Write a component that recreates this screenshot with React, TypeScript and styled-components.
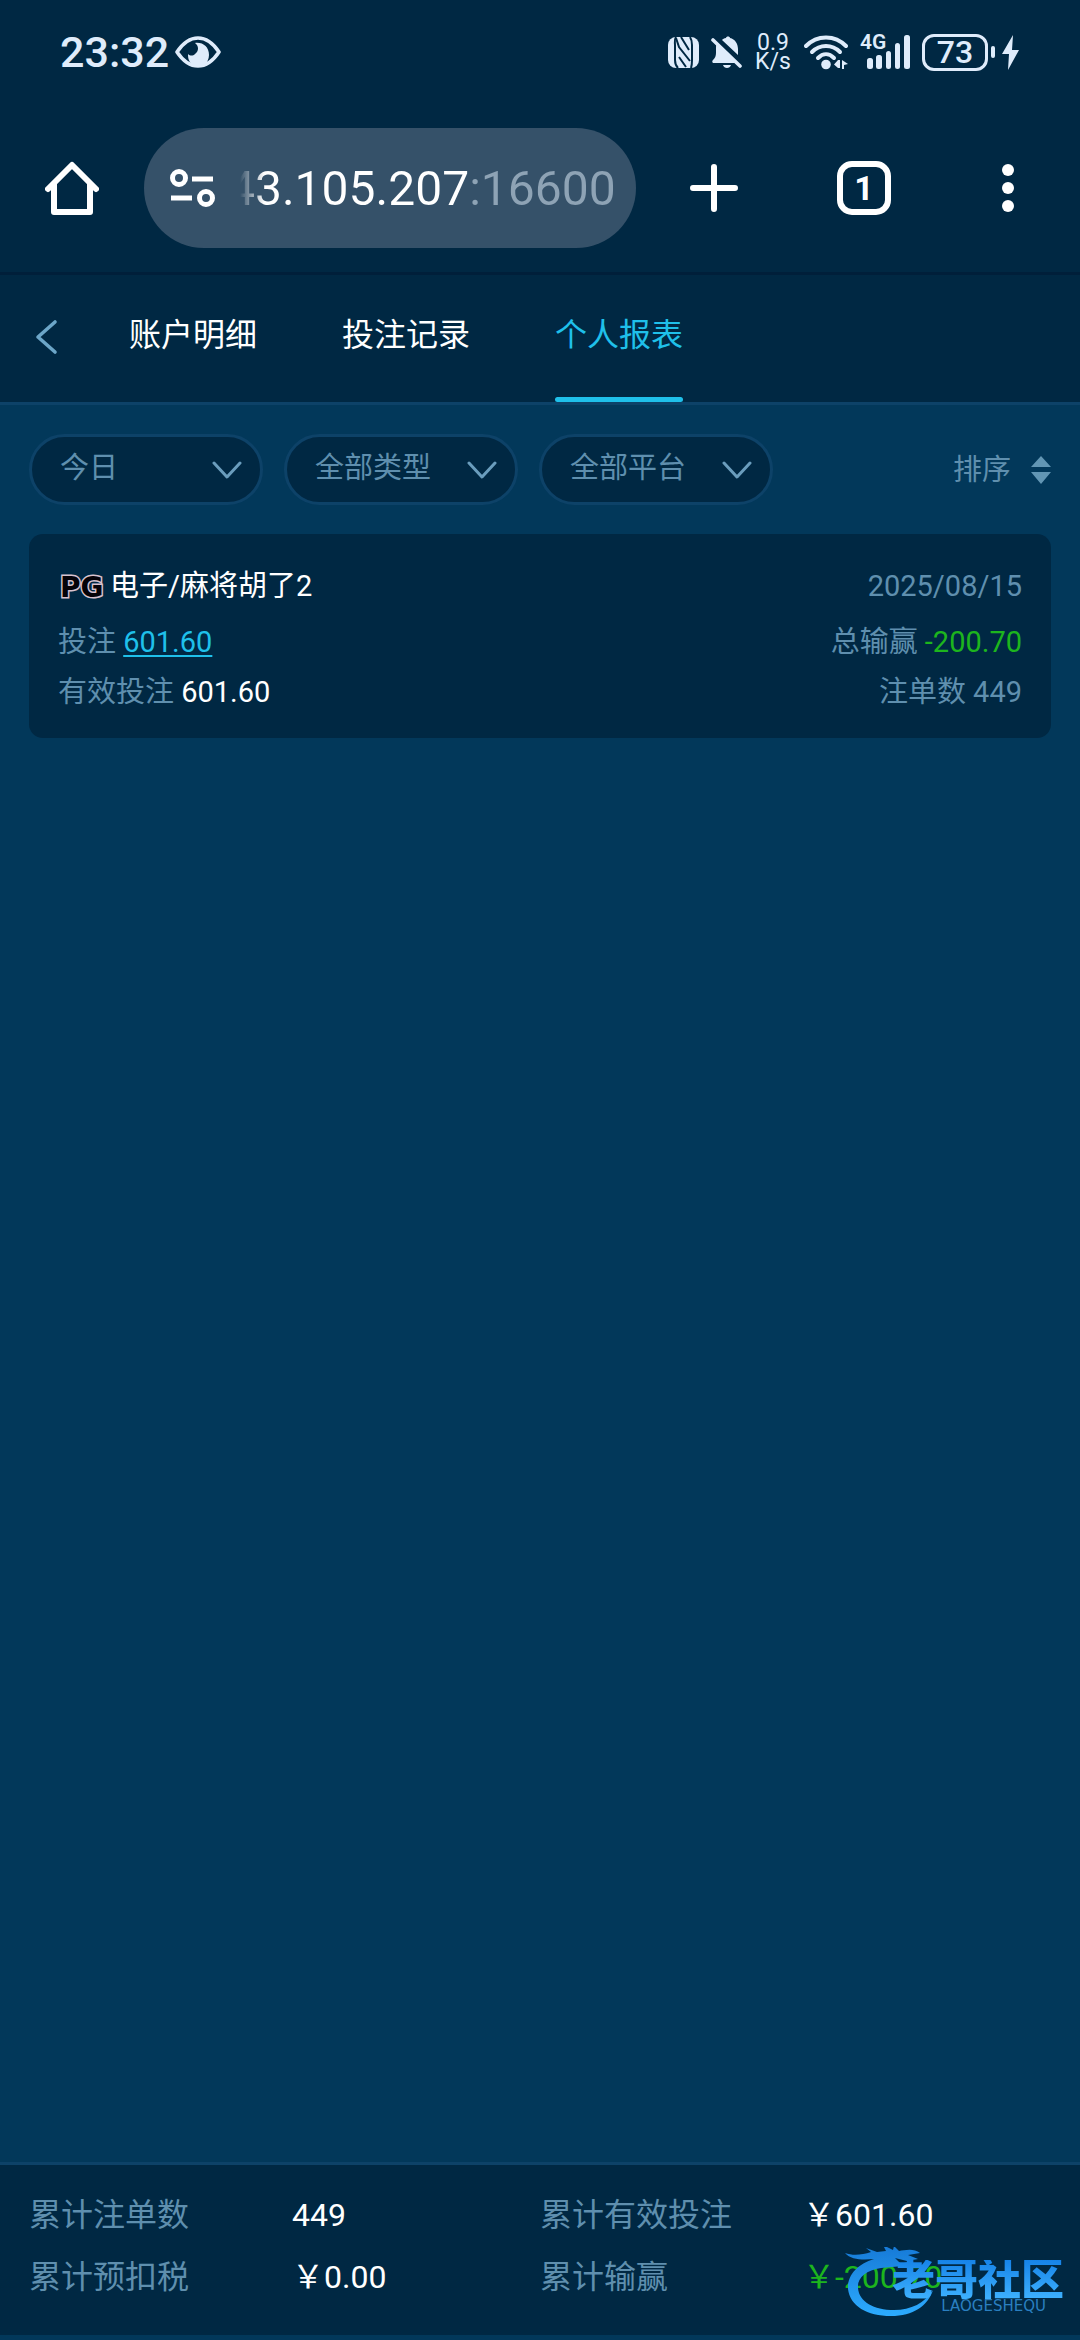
import React from 'react';
import styled, { createGlobalStyle } from 'styled-components';

const color = {
  deep: '#002843',
  page: '#02385a',
  line: '#0d4268',
  seam: '#001f3a',
  muted: '#5f8fae',
  accent: '#1fc0ea',
  green: '#1db51d',
  status: '#dfecfb',
  pill: '#355169',
};

const font = `Roboto, "Noto Sans CJK SC", sans-serif`;

const GlobalStyle = createGlobalStyle`
  * { box-sizing: border-box; }
  body { margin: 0; background: ${color.page}; font-family: ${font}; }
  button, select, input { font: inherit; color: inherit; border: 0; background: none; padding: 0; margin: 0; }
  svg { display: block; flex: none; }
`;

const Screen = styled.div`
  min-height: 100vh;
  display: flex;
  flex-direction: column;
  padding-bottom: 5px;
  background: ${color.page};
  color: #fff;
`;

const StatusBar = styled.div`
  height: 104px;
  padding: 0 61px 0 60px;
  display: flex;
  align-items: center;
  justify-content: space-between;
  background: ${color.deep};
  color: ${color.status};
`;

const StatusGroup = styled.div<{ $gap: number }>`
  display: flex;
  align-items: center;
  gap: ${(p) => p.$gap}px;
`;

const Clock = styled.time`
  font-size: 43px;
  line-height: 60px;
  font-weight: 500;
`;

const NetSpeed = styled.div`
  width: 32px;
  margin: 0 3px;
  display: flex;
  flex-direction: column;
  align-items: center;
  font-size: 23px;
  line-height: 19px;
  font-weight: 400;
`;

const Signal = styled.div`
  position: relative;
  width: 50px;
`;

const SignalLabel = styled.span`
  position: absolute;
  left: 0;
  top: -4px;
  font-size: 21px;
  line-height: 24px;
  font-weight: 600;
`;

const Battery = styled.div`
  width: 66px;
  height: 37px;
  border: 3px solid currentColor;
  border-radius: 12px;
  display: flex;
  align-items: center;
  justify-content: center;
  font-size: 32px;
  line-height: 32px;
  font-weight: 500;
`;

const BatteryTip = styled.div`
  width: 4px;
  height: 12px;
  margin-right: 4px;
  border-radius: 2px;
  background: currentColor;
`;

const Toolbar = styled.div`
  height: 171px;
  display: flex;
  align-items: center;
  background: ${color.deep};
  border-bottom: 3px solid ${color.seam};
`;

const ToolButton = styled.button<{ $width: number }>`
  width: ${(p) => p.$width}px;
  height: 120px;
  display: flex;
  align-items: center;
  justify-content: center;
`;

const AddressBar = styled.label`
  flex: 1;
  min-width: 0;
  height: 120px;
  padding: 0 12px 0 26px;
  display: flex;
  align-items: center;
  gap: 13px;
  border-radius: 60px;
  background: ${color.pill};
`;

const AddressInput = styled.input`
  flex: 1;
  min-width: 0;
  height: 72px;
  font-size: 48px;
  outline: none;
  color: transparent;
  background: linear-gradient(
    90deg,
    transparent 12px,
    #fff 36px,
    #fff 241px,
    #8ea3b5 241px
  );
  background-clip: text;
  -webkit-background-clip: text;
`;

const TabCount = styled.span`
  width: 54px;
  height: 54px;
  border: 6px solid #fff;
  border-radius: 15px;
  display: flex;
  align-items: center;
  justify-content: center;
  font-size: 34px;
  line-height: 34px;
  font-weight: 700;
`;

const NavBar = styled.nav`
  height: 130px;
  display: flex;
  align-items: stretch;
  background: ${color.deep};
  border-bottom: 3px solid ${color.line};
`;

const BackButton = styled.button`
  width: 129px;
  padding: 0 0 3px 35px;
  display: flex;
  align-items: center;
`;

const Tabs = styled.div`
  display: flex;
  gap: 85px;
`;

const Tab = styled.button<{ $active?: boolean }>`
  display: flex;
  flex-direction: column;
  justify-content: space-between;
  padding-top: 36px;
  font-size: 32px;
  line-height: 48px;
  color: ${(p) => (p.$active ? color.accent : '#fff')};

  &::after {
    content: '';
    width: 100%;
    height: 5px;
    border-radius: 3px;
    background: ${(p) => (p.$active ? color.accent : 'transparent')};
  }
`;

const Main = styled.main`
  flex: 1;
  padding: 29px;
  display: flex;
  flex-direction: column;
  gap: 29px;
`;

const Filters = styled.div`
  display: flex;
  align-items: center;
  gap: 21px;
  color: ${color.muted};
`;

const SelectBox = styled.div`
  width: 234px;
  height: 71px;
  display: grid;
  align-items: center;

  > * {
    grid-area: 1 / 1;
  }

  > svg {
    justify-self: end;
    margin-right: 21px;
    pointer-events: none;
  }
`;

const Select = styled.select`
  appearance: none;
  width: 100%;
  height: 100%;
  padding: 0 60px 3px 28px;
  border: 3px solid ${color.line};
  border-radius: 36px;
  background: ${color.deep};
  font-size: 29px;
`;

const SortButton = styled.button`
  margin-left: auto;
  display: flex;
  align-items: center;
  gap: 20px;
  font-size: 29px;
  line-height: 44px;
`;

const Card = styled.article`
  padding: 30px 29px 21px;
  border-radius: 14px;
  background: ${color.deep};
  color: ${color.muted};
  font-size: 29px;
  line-height: 50px;
`;

const CardHead = styled.header`
  display: flex;
  align-items: center;
  justify-content: space-between;
  margin-bottom: 9px;
  line-height: 44px;
`;

const GameTitle = styled.h2`
  margin: 0;
  display: flex;
  align-items: center;
  font-size: 29px;
  font-weight: 400;
  color: #fff;
`;

const Brand = styled.span`
  width: 52px;
  padding: 4px 0 0 2px;
  font-family: "DejaVu Sans", sans-serif;
  font-size: 28px;
  line-height: 40px;
  font-weight: 700;
  color: #050208;
  -webkit-text-stroke: 3px #d8c2cf;
  paint-order: stroke fill;
`;

const CardRow = styled.div`
  display: flex;
  justify-content: space-between;
`;

const Value = styled.span<{ $tone?: 'green' }>`
  color: ${(p) => (p.$tone === 'green' ? color.green : '#fff')};
`;

const BetLink = styled.a`
  color: ${color.accent};
  text-decoration: underline;
  text-decoration-thickness: 2px;
  text-underline-offset: 3px;
`;

const Footer = styled.footer`
  position: relative;
  padding: 19px 29px 27px;
  border-top: 3px solid ${color.line};
  background: ${color.deep};
`;

const Totals = styled.dl`
  margin: 0;
  display: grid;
  grid-template-columns: 1fr 1fr;
  font-size: 32px;
  line-height: 62px;
`;

const Total = styled.div`
  display: flex;

  dt {
    width: 263px;
    color: ${color.muted};
  }

  dd {
    margin: 0;
  }
`;

const Watermark = styled.div`
  position: absolute;
  right: 16px;
  bottom: 18px;
  display: flex;
  align-items: center;
  pointer-events: none;
`;

const WatermarkWords = styled.div`
  margin: 8px 0 0 -44px;
  display: flex;
  flex-direction: column;
  align-items: flex-end;
`;

const WatermarkName = styled.span`
  font-size: 43px;
  line-height: 40px;
  font-weight: 900;
  background: linear-gradient(#1683e8, #3fb2ff);
  background-clip: text;
  -webkit-background-clip: text;
  color: transparent;
`;

const WatermarkLatin = styled.span`
  padding-right: 18px;
  font-family: "DejaVu Sans", sans-serif;
  font-size: 15px;
  line-height: 12px;
  color: #2a7fc0;
`;

const EyeIcon = () => (
  <svg width="46" height="32" viewBox="0 0 46 32" aria-hidden="true">
    <path d="M2 16C8 7 15 2 23 2s15 5 21 14c-6 9-13 14-21 14S8 25 2 16Z" fill="none" stroke="currentColor" strokeWidth="3.6" strokeLinejoin="round" />
    <path d="M20 7c8-1 14 4 14 12 0 4-2 8-5 10H18c-4-3-5-6-5-11 2 2 5 2 7 0 4-3 4-8 0-11Z" fill="currentColor" />
  </svg>
);

const NfcIcon = () => (
  <svg width="31" height="33" viewBox="0 0 31 33" aria-hidden="true">
    <rect x="0" y="1" width="31" height="31" rx="8" fill="currentColor" />
    <path d="M8 1C6 4 7 6 7 9v15c0 3 0 5 3 8M22 1c2 3 2 5 2 8v15c0 3 0 5-1 8" fill="none" stroke="#002843" strokeWidth="2" />
    <path d="M8 2 11 11 22 25M11 21l7 10M13 1l8 13" fill="none" stroke="#002843" strokeWidth="2" />
  </svg>
);

const BellOffIcon = () => (
  <svg width="31" height="34" viewBox="0 0 31 34" aria-hidden="true">
    <path d="M11 5c1-1 2-2 4-2 0-2 4-2 4 0 5 1 8 6 8 11v6L11 5ZM6 9l19 19H2c-1-1-1-2 0-3 2-2 3-4 3-7v-5c0-2 0-3 1-4ZM12 30h8c-1 4-7 4-8 0Z" fill="currentColor" />
    <path d="m2 5 27 26" stroke="currentColor" strokeWidth="3.6" strokeLinecap="round" />
    <path d="m5 2 26 25" stroke="#002843" strokeWidth="2" />
  </svg>
);

const WifiIcon = () => (
  <svg width="44" height="36" viewBox="0 0 44 36" aria-hidden="true">
    <g fill="none" stroke="currentColor" strokeWidth="4" strokeLinecap="round">
      <path d="M2 12C13 .5 31 .5 42 12" />
      <path d="M8 18c8-8 20-8 28 0" />
      <path d="M14 24c5-5 11-5 16 0" />
    </g>
    <circle cx="22" cy="30.500" r="4.800" fill="currentColor" />
    <path d="M34 26v8l-4-3.500ZM34 26h2v8h-2ZM38 26l6 4-4 1v4h-2Z" fill="currentColor" />
  </svg>
);

const SignalBars = () => (
  <svg width="50" height="36" viewBox="0 0 50 36" aria-hidden="true">
    <g fill="currentColor">
      <rect x="7" y="24" width="6" height="11" rx="2.500" />
      <rect x="16" y="21" width="6" height="14" rx="2.500" />
      <rect x="26" y="17" width="5" height="18" rx="2.500" />
      <rect x="35" y="9" width="5" height="26" rx="2.500" />
      <rect x="44" y="1" width="6" height="34" rx="2.500" />
    </g>
  </svg>
);

const BoltIcon = () => (
  <svg width="17" height="35" viewBox="0 0 17 35" aria-hidden="true">
    <path d="M11 0 0 19h7L6 35l11-20h-7Z" fill="currentColor" />
  </svg>
);

const HomeIcon = () => (
  <svg width="54" height="54" viewBox="0 0 54 54" aria-hidden="true">
    <path d="M3 28 27 4l24 24M9 23v28h36V23" fill="none" stroke="#fff" strokeWidth="6" strokeLinecap="round" strokeLinejoin="round" />
  </svg>
);

const SiteInfoIcon = () => (
  <svg width="45" height="40" viewBox="0 0 45 40" aria-hidden="true">
    <g fill="none" stroke="#fff" strokeWidth="5">
      <circle cx="9" cy="10" r="6.500" />
      <path d="M22 11h21M1 30h21" />
      <circle cx="36" cy="30" r="6.500" />
    </g>
  </svg>
);

const PlusIcon = () => (
  <svg width="48" height="48" viewBox="0 0 48 48" aria-hidden="true">
    <path d="M24 3v42M3 24h42" stroke="#fff" strokeWidth="6" strokeLinecap="round" />
  </svg>
);

const MoreIcon = () => (
  <svg width="12" height="48" viewBox="0 0 12 48" fill="#fff" aria-hidden="true">
    <circle cx="6" cy="6" r="6" />
    <circle cx="6" cy="24" r="6" />
    <circle cx="6" cy="42" r="6" />
  </svg>
);

const BackIcon = () => (
  <svg width="23" height="36" viewBox="0 0 23 36" aria-hidden="true">
    <path d="M20 3 3 18l17 15" fill="none" stroke="#6ca6c8" strokeWidth="3.600" strokeLinecap="round" strokeLinejoin="round" />
  </svg>
);

const ChevronIcon = () => (
  <svg width="30" height="18" viewBox="0 0 30 18" aria-hidden="true">
    <path d="m2 2 13 14L28 2" fill="none" stroke="#6a9dbd" strokeWidth="3" strokeLinecap="round" strokeLinejoin="round" />
  </svg>
);

const SortIcon = () => (
  <svg width="20" height="30" viewBox="0 0 20 30" fill="#6296b4" aria-hidden="true">
    <path d="M10 1 20 12H0ZM10 29 20 17H0Z" />
  </svg>
);

const DragonIcon = () => (
  <svg width="92" height="70" viewBox="0 0 92 70" aria-hidden="true">
    <defs>
      <linearGradient id="dragon" x1="0" y1="0" x2="0" y2="1">
        <stop offset="0" stopColor="#1679d6" />
        <stop offset="1" stopColor="#2cabff" />
      </linearGradient>
    </defs>
    <g fill="url(#dragon)">
      <path d="M30 12C14 17 3 28 4 42c2 17 19 27 43 27 22 0 37-10 42-26-8 13-22 20-39 20-20 0-35-8-36-22-1-10 8-18 23-20l22-2-8-8 12 3 11-2-10-4 12-2c-6-5-15-3-21-2l-5-5-1 4-10-5 3 6-9 1-11-4 5 4C18 8 9 9 1 6c6 7 18 7 29 6Z" />
      <path d="m52 18 18 3 6-2-12-4Z" />
    </g>
  </svg>
);

const FilterSelect = ({ label, value }: { label: string; value: string }) => (
  <SelectBox>
    <Select aria-label={label} defaultValue={value}>
      <option>{value}</option>
    </Select>
    <ChevronIcon />
  </SelectBox>
);

const tabs = ['账户明细', '投注记录', '个人报表'];

const totals: { label: string; value: string; tone?: 'green' }[] = [
  { label: '累计注单数', value: '449' },
  { label: '累计有效投注', value: '￥601.60' },
  { label: '累计预扣税', value: '￥0.00' },
  { label: '累计输赢', value: '￥-200.70', tone: 'green' },
];

export default function App() {
  return (
    <Screen lang="zh-CN">
      <GlobalStyle />
      <StatusBar>
        <StatusGroup $gap={6}>
          <Clock>23:32</Clock>
          <EyeIcon />
        </StatusGroup>
        <StatusGroup $gap={12}>
          <NfcIcon />
          <BellOffIcon />
          <NetSpeed>
            <span>0.9</span>
            <span>K/s</span>
          </NetSpeed>
          <WifiIcon />
          <Signal>
            <SignalLabel>4G</SignalLabel>
            <SignalBars />
          </Signal>
          <StatusGroup $gap={3}>
            <Battery>73</Battery>
            <BatteryTip />
            <BoltIcon />
          </StatusGroup>
        </StatusGroup>
      </StatusBar>

      <Toolbar>
        <ToolButton $width={144} aria-label="主页">
          <HomeIcon />
        </ToolButton>
        <AddressBar>
          <SiteInfoIcon />
          <AddressInput type="text" aria-label="网址" defaultValue="43.105.207:16600" />
        </AddressBar>
        <ToolButton $width={156} aria-label="新标签页">
          <PlusIcon />
        </ToolButton>
        <ToolButton $width={144} aria-label="切换标签页">
          <TabCount>1</TabCount>
        </ToolButton>
        <ToolButton $width={144} aria-label="更多">
          <MoreIcon />
        </ToolButton>
      </Toolbar>

      <NavBar>
        <BackButton aria-label="返回">
          <BackIcon />
        </BackButton>
        <Tabs>
          {tabs.map((name) => (
            <Tab key={name} $active={name === '个人报表'}>
              {name}
            </Tab>
          ))}
        </Tabs>
      </NavBar>

      <Main>
        <Filters>
          <FilterSelect label="日期" value="今日" />
          <FilterSelect label="类型" value="全部类型" />
          <FilterSelect label="平台" value="全部平台" />
          <SortButton>
            排序
            <SortIcon />
          </SortButton>
        </Filters>

        <Card>
          <CardHead>
            <GameTitle>
              <Brand>PG</Brand>
              电子/麻将胡了2
            </GameTitle>
            <time>2025/08/15</time>
          </CardHead>
          <CardRow>
            <span>
              投注 <BetLink href="#bets">601.60</BetLink>
            </span>
            <span>
              总输赢 <Value $tone="green">-200.70</Value>
            </span>
          </CardRow>
          <CardRow>
            <span>
              有效投注 <Value>601.60</Value>
            </span>
            <span>注单数 449</span>
          </CardRow>
        </Card>
      </Main>

      <Footer>
        <Totals>
          {totals.map((t) => (
            <Total key={t.label}>
              <dt>{t.label}</dt>
              <dd>
                <Value $tone={t.tone}>{t.value}</Value>
              </dd>
            </Total>
          ))}
        </Totals>
        <Watermark>
          <DragonIcon />
          <WatermarkWords>
            <WatermarkName>老哥社区</WatermarkName>
            <WatermarkLatin>LAOGESHEQU</WatermarkLatin>
          </WatermarkWords>
        </Watermark>
      </Footer>
    </Screen>
  );
}
